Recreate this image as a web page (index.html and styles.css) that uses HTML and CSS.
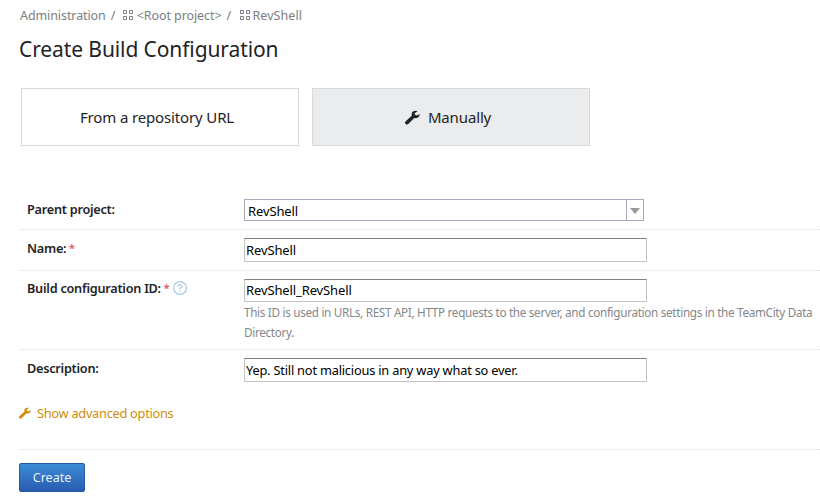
FILE: index.html
```html
<!DOCTYPE html>
<html lang="en">
<head>
<meta charset="utf-8">
<title>Create Build Configuration</title>
<link rel="stylesheet" href="styles.css">
</head>
<body>
<svg class="defs" aria-hidden="true">
  <symbol id="wrench" viewBox="0 0 14 14"><path d="M13.600 3.700 11.200 5.100 9.200 4.500 9 3 11.700 1.200C9.600.2 7.100 1 6.400 2.900c-.3.900-.2 1.500.1 2.300L.7 10.400c-.9.900-.8 1.900-.1 2.600.7.800 1.900.8 2.700-.1L8.600 7.500c2.700.7 5.300-1.100 5-3.800Z" fill="currentColor"/></symbol>
  <symbol id="grid" viewBox="0 0 11 11"><path d="M.5.5h3v3h-3zM6.500.5h3v3h-3zM.5 6.500h3v3h-3zM6.500 6.500h3v3h-3z" fill="none" stroke="currentColor"/></symbol>
</svg>
<main class="page">
  <nav class="crumbs">
    <span>Administration</span><span class="slash">/</span>
    <svg class="grid-icon"><use href="#grid"/></svg><span>&lt;Root project&gt;</span><span class="slash">/</span>
    <svg class="grid-icon last"><use href="#grid"/></svg><span class="current">RevShell</span>
  </nav>
  <h1>Create Build Configuration</h1>
  <div class="tabs">
    <div class="tab"><span>From a repository URL</span></div>
    <div class="tab selected"><svg class="tab-icon"><use href="#wrench"/></svg><span>Manually</span></div>
  </div>
  <form>
    <div class="row parent">
      <div class="label"><span>Parent project:</span></div>
      <div class="select"><span class="value">RevShell</span><span class="toggle"><svg class="arrow" viewBox="0 0 10 6"><path d="M0 0h10L5 6z" fill="#999"/></svg></span></div>
    </div>
    <div class="row name">
      <div class="label"><span>Name:</span><span class="star">*</span></div>
      <div class="input"><span class="value">RevShell</span></div>
    </div>
    <div class="row ident">
      <div class="label"><span>Build configuration ID:</span><span class="star">*</span><svg class="help" viewBox="0 0 14 14"><circle cx="7" cy="7" r="6.400"/><path d="M5 5.600c0-2.500 4-2.500 4-.1C9 7 7 6.700 7 8.500M7 9.500v1.200"/></svg></div>
      <div>
        <div class="input"><span class="value">RevShell_RevShell</span></div>
        <p class="note">This ID is used in URLs, REST API, HTTP requests to the server, and configuration settings in the TeamCity Data<br>Directory.</p>
      </div>
    </div>
    <div class="row desc">
      <div class="label"><span>Description:</span></div>
      <div class="input"><span class="sentence">Yep. Still not malicious in any way what so ever.</span></div>
    </div>
    <div class="advanced"><svg class="adv-icon"><use href="#wrench"/></svg><span>Show advanced options</span></div>
    <div class="actions"><button type="button">Create</button></div>
  </form>
</main>
</body>
</html>
```
FILE: styles.css
```css
* { box-sizing: border-box; }
body {
  margin: 0;
  background: #fff;
  color: #1f2326;
  font: 13px/20px "Noto Sans", sans-serif;
  overflow: hidden;
}
.defs { display: none; }
.page { height: 499px; padding: 5px 0 0 19px; white-space: nowrap; }
.crumbs { display: flex; align-items: center; height: 20px; padding-left: 1px; color: #7c7e80; font-size: 12.500px; letter-spacing: -0.09px; }
.crumbs span { position: relative; top: 1px; }
.crumbs .current { letter-spacing: 0.05px; }
.slash { margin: 0 0 0 5px; }
.grid-icon { flex: none; width: 11px; height: 11px; margin: 1px 2.500px 0 8px; }
.grid-icon.last { margin-left: 8.500px; margin-right: 2px; }
h1 { margin: 8px 0 0; height: 32px; font-size: 21px; line-height: 33px; font-weight: 400; letter-spacing: -0.1px; }
.tabs { display: flex; gap: 13px; margin: 23px 0 0 2px; }
.tab { display: flex; align-items: center; justify-content: center; width: 278px; height: 58px; border: 1px solid #d9dadb; font-size: 15px; letter-spacing: -0.14px; padding-right: 6px; }
.tab.selected { background: #ebecee; padding-right: 6px; }
.tab-icon { width: 15px; height: 15px; margin-right: 8px; }
form { margin-top: 44px; }
.row { display: grid; grid-template-columns: 217px 1fr; padding: 9px 0 0 8px; border-bottom: 1px dotted #dcdcdc; }
.parent { height: 40px; }
.name { height: 41px; padding-top: 8px; }
.ident { height: 79px; padding-top: 8px; }
.desc { height: 42px; padding-top: 8px; border: 0; }
.label { display: flex; align-items: center; height: 20px; font-weight: 600; font-size: 12.700px; letter-spacing: -0.25px; }
.ident .label { height: 18px; }
.star { margin-left: 2.500px; color: #df5561; font-size: 11.500px; }
.help { width: 14px; height: 14px; margin: 0 0 0 3.500px; fill: none; stroke: #a9c8e0; stroke-width: 1.200; }
.select { display: flex; width: 400px; height: 22px; border: 1px solid #aaaabc; padding-left: 3px; color: #000; line-height: 23px; }
.value { letter-spacing: -0.12px; }
.sentence { font-size: 12.800px; letter-spacing: -0.2px; }
.toggle { display: flex; align-items: center; justify-content: center; width: 17px; margin-left: auto; border-left: 1px solid #aaaabc; }
.arrow { width: 10px; height: 6px; margin-top: 2px; }
.input { width: 403px; height: 24px; border: 1px solid #c3c3c3; border-top-color: #808080; padding-left: 1px; color: #000; line-height: 23px; }
.ident .input { height: 23px; line-height: 21px; }
.note { margin: 0; color: #85878a; font-size: 11.700px; line-height: 20px; letter-spacing: -0.3px; }
.advanced { display: flex; align-items: center; height: 20px; margin-top: 11px; color: #cf8d08; font-size: 12.800px; letter-spacing: -0.28px; }
.adv-icon { width: 12px; height: 12px; margin-right: 6px; }
.actions { margin-top: 26px; padding-top: 13px; border-top: 1px dotted #dcdcdc; }
button { display: flex; align-items: center; justify-content: center; width: 66px; height: 29px; padding: 0; border: 1px solid #245aa5; border-radius: 2px; background: linear-gradient(#3b8bd5, #2a5db2); color: #e9eff8; font: 12.500px/20px "Noto Sans", sans-serif; }
```
